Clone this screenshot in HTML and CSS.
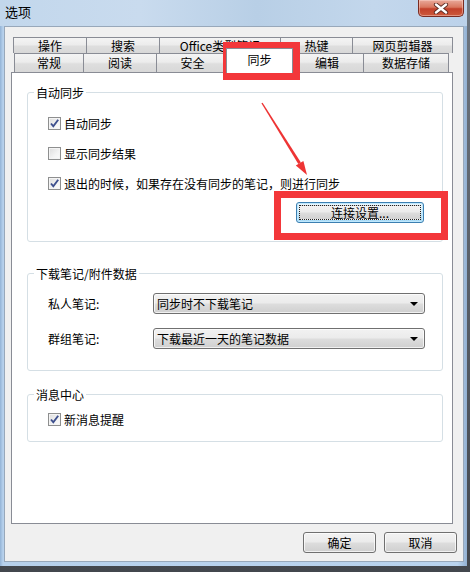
FILE: index.html
```html
<!DOCTYPE html>
<html lang="zh-CN">
<head>
<meta charset="utf-8">
<title>选项</title>
<link rel="stylesheet" href="styles.css">
</head>
<body>
<div class="window">
  <div class="titlebar">
    <span class="title">选项</span>
    <div class="close">
      <svg width="16" height="11" viewBox="0 0 16 11">
        <path d="M3 1.5 L13 9.5 M13 1.5 L3 9.5" stroke="#5a2a22" stroke-width="4.2" stroke-linecap="round" fill="none"/>
        <path d="M3 1.5 L13 9.5 M13 1.5 L3 9.5" stroke="#ffffff" stroke-width="2.4" stroke-linecap="round" fill="none"/>
      </svg>
    </div>
  </div>
  <div class="client">
    <div class="tabs">
      <div class="tabrow row1">
        <div class="tab w1a">操作</div>
        <div class="tab w1b">搜索</div>
        <div class="tab w1c">Office类型笔记</div>
        <div class="tab w1d">热键</div>
        <div class="tab w1e">网页剪辑器</div>
      </div>
      <div class="tabrow row2">
        <div class="tab w2a">常规</div>
        <div class="tab w2b">阅读</div>
        <div class="tab w2c">安全</div>
        <div class="tab sel w2d">同步</div>
        <div class="tab w2e">编辑</div>
        <div class="tab w2f">数据存储</div>
      </div>
    </div>
    <div class="panel">
      <div class="group g1">
        <span class="gtitle">自动同步</span>
        <div class="checkrow first"><span class="cb on"><svg width="11" height="11" viewBox="0 0 11 11"><path d="M2 5.5 L4.3 8.3 L9.2 1.8" stroke="#3d4f8d" stroke-width="1.9" fill="none"/></svg></span><span>自动同步</span></div>
        <div class="checkrow"><span class="cb"></span><span>显示同步结果</span></div>
        <div class="checkrow"><span class="cb on"><svg width="11" height="11" viewBox="0 0 11 11"><path d="M2 5.5 L4.3 8.3 L9.2 1.8" stroke="#3d4f8d" stroke-width="1.9" fill="none"/></svg></span><span>退出的时候，如果存在没有同步的笔记，则进行同步</span></div>
        <div class="btn connect"><span class="focus">连接设置...</span></div>
      </div>
      <div class="group g2">
        <span class="gtitle">下载笔记/附件数据</span>
        <div class="selrow first"><span class="lbl">私人笔记:</span><div class="combo"><span>同步时不下载笔记</span><i class="arrow"></i></div></div>
        <div class="selrow"><span class="lbl">群组笔记:</span><div class="combo"><span>下载最近一天的笔记数据</span><i class="arrow"></i></div></div>
      </div>
      <div class="group g3">
        <span class="gtitle">消息中心</span>
        <div class="checkrow first"><span class="cb on"><svg width="11" height="11" viewBox="0 0 11 11"><path d="M2 5.5 L4.3 8.3 L9.2 1.8" stroke="#3d4f8d" stroke-width="1.9" fill="none"/></svg></span><span>新消息提醒</span></div>
      </div>
    </div>
    <div class="buttons">
      <div class="btn dlg">确定</div>
      <div class="btn dlg">取消</div>
    </div>
  </div>
  <div class="mark mark1"></div>
  <div class="mark mark2"></div>
  <svg class="arrowsvg" width="470" height="572" viewBox="0 0 470 572">
    <polygon points="261.4,103.3 262.6,102.7 300.9,162.6 298.3,164.0" fill="#ee3434"/>
    <polygon points="307,175 303.4,160.9 295.8,165.6" fill="#ee3434"/>
  </svg>
</div>
</body>
</html>
```

FILE: styles.css
```css
* { box-sizing: border-box; }

html, body {
  margin: 0;
  padding: 0;
}

body {
  width: 470px;
  height: 572px;
  overflow: hidden;
  background: linear-gradient(180deg, #6e7680, #43474d);
  font-family: "Noto Sans CJK SC", "Noto Sans", sans-serif;
  font-size: 12px;
  color: #000;
}

.window {
  position: relative;
  width: 467px;
  height: 566px;
  display: flex;
  flex-direction: column;
  background: linear-gradient(90deg, #93b3d6 0px, #b7d1ec 3px, #b9d3ee 98%, #93b1d2 100%);
}

.titlebar {
  height: 26px;
  display: flex;
  justify-content: space-between;
  align-items: flex-start;
  background: linear-gradient(90deg, #c2d7ec 0%, #c9dbee 30%, #b8cfe6 55%, #c3d7ec 80%, #bcd2ea 100%);
}

.title {
  padding: 4px 0 0 5px;
  line-height: 15px;
  font-size: 13px;
}

.close {
  width: 46px;
  height: 17px;
  margin-right: 3px;
  border: 1px solid #7a2c22;
  border-top: none;
  border-radius: 0 0 5px 5px;
  background: linear-gradient(180deg, #e9a99a 0%, #d9775f 45%, #c2402a 55%, #cc5a3c 100%);
  box-shadow: inset 0 0 0 1px rgba(255,220,210,0.45);
  display: flex;
  align-items: center;
  justify-content: center;
}

.client {
  margin-left: 4px;
  width: 460px;
  height: 536px;
  background: #f0f0f0;
  border: 1px solid #98a8ba;
  display: flex;
  flex-direction: column;
}

.tabs {
  padding: 10px 0 0 8px;
}

.tabrow {
  display: flex;
}

.tab {
  border: 1px solid #898c95;
  border-bottom: none;
  background: linear-gradient(180deg, #f4f4f4 0%, #ececec 45%, #dedede 55%, #d8d8d8 100%);
  text-align: center;
  font-size: 12px;
  white-space: nowrap;
  overflow: hidden;
}

.tab + .tab { margin-left: -1px; }

.row1 .tab { height: 16px; line-height: 15px; }
.w1a { width: 74px; }
.w1b { width: 74px; }
.w1c { width: 122px; }
.w1d { width: 73px; }
.w1e { width: 101px; }

.row2 {
  height: 19px;
  padding-left: 1px;
  align-items: flex-end;
}
.row2 .tab { height: 19px; line-height: 18px; }
.w2a { width: 70px; }
.w2b { width: 74px; }
.w2c { width: 73px; }
.w2e { width: 74px; }
.w2f { width: 86px; }

.row2 .tab.sel {
  width: 67px;
  height: 25px;
  margin-bottom: -1px;
  margin-left: -3px;
  margin-right: -2px;
  line-height: 22px;
  background: #fff;
  position: relative;
  z-index: 2;
}
.w2d { width: 67px; }

.panel {
  margin-left: 6px;
  width: 442px;
  height: 452px;
  background: #fff;
  border: 1px solid #898c95;
  padding: 19px 9px 0 15px;
  display: flex;
  flex-direction: column;
}

.group {
  border: 1px solid #d5dfe5;
  border-radius: 3px;
  display: flex;
  flex-direction: column;
  align-items: flex-start;
}

.g1 { height: 150px; }
.g2 { height: 98px; margin-top: 31px; }
.g3 { height: 48px; margin-top: 23px; }

.gtitle {
  margin: -8px 0 0 6px;
  padding: 0 2px;
  line-height: 15px;
  background: #fff;
}

.checkrow {
  display: flex;
  align-items: center;
  height: 17px;
  margin-left: 20px;
  margin-top: 13px;
  gap: 3px;
  line-height: 15px;
}
.g1 .checkrow.first { margin-top: 15px; }
.g3 .checkrow.first { margin-top: 9px; }

.cb {
  width: 13px;
  height: 13px;
  border: 1px solid #8e8f8f;
  background: linear-gradient(135deg, #dcdcdc 0%, #f3f3f3 60%, #fbfbfb 100%);
  box-shadow: inset 0 0 0 1px #f4f4f4;
  display: flex;
  align-items: center;
  justify-content: center;
}

.btn {
  border: 1px solid #707070;
  border-radius: 3px;
  background: linear-gradient(180deg, #f2f2f2 0%, #ebebeb 48%, #dddddd 52%, #cfcfcf 100%);
  box-shadow: inset 0 0 0 1px rgba(255,255,255,0.7);
  display: flex;
  align-items: center;
  justify-content: center;
  line-height: 15px;
}

.connect {
  width: 128px;
  height: 21px;
  align-self: flex-end;
  margin: 10px 18px 0 0;
  border-color: #3c7fb1;
  background: linear-gradient(180deg, #eaf6fd 0%, #d9f0fc 48%, #bee6fd 52%, #a7d9f5 100%);
  box-shadow: inset 0 0 0 1px #bfe8fd;
  padding: 2px;
}
.connect .focus {
  flex: 1;
  height: 100%;
  border: 1px dotted #222;
  text-align: center;
  line-height: 13px;
  background: linear-gradient(180deg, #f2f2f2 0%, #ebebeb 48%, #dddddd 52%, #d2d2d2 100%);
}

.selrow {
  display: flex;
  align-items: center;
  margin-left: 20px;
  margin-top: 14px;
}
.selrow.first { margin-top: 12px; }

.lbl {
  width: 105px;
  line-height: 15px;
}

.combo {
  width: 272px;
  height: 21px;
  border: 1px solid #707070;
  border-radius: 3px;
  background: linear-gradient(180deg, #f2f2f2 0%, #ebebeb 48%, #dddddd 52%, #cfcfcf 100%);
  box-shadow: inset 0 0 0 1px rgba(255,255,255,0.7);
  display: flex;
  align-items: center;
  justify-content: space-between;
  padding: 0 6px 0 3px;
  line-height: 15px;
}

.arrow {
  width: 0;
  height: 0;
  border-left: 4px solid transparent;
  border-right: 4px solid transparent;
  border-top: 4px solid #000;
}

.buttons {
  display: flex;
  justify-content: flex-end;
  gap: 8px;
  margin-top: 8px;
  padding-right: 6px;
}

.dlg {
  width: 73px;
  height: 21px;
}

.mark {
  position: absolute;
  border: 7px solid #f3373a;
  pointer-events: none;
}
.mark1 { left: 223px; top: 42px; width: 77px; height: 38px; }
.mark2 { left: 274px; top: 191px; width: 174px; height: 49px; }

.arrowsvg {
  position: absolute;
  left: 0;
  top: 0;
  pointer-events: none;
}
```
